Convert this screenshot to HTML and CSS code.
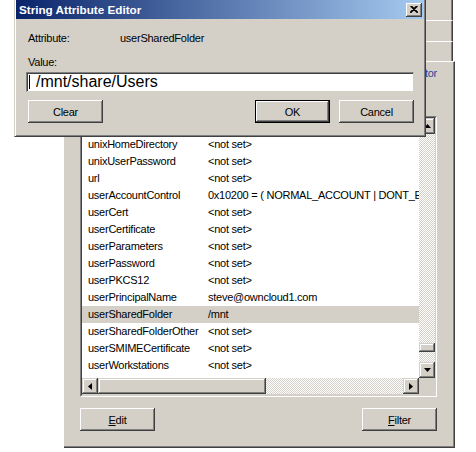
FILE: index.html
```html
<!DOCTYPE html>
<html>
<head>
<meta charset="utf-8">
<link rel="stylesheet" href="styles.css">
</head>
<body>
<div class="desk">
  <div class="sheet">
    <div class="tabrow r1"></div>
    <div class="tabrow r2"></div>
    <div class="tabrow r3"></div>
    <div class="page">
      <div class="tabfront"><span class="tablabel">Attribute Editor</span></div>
      <div class="pagebody">
        <div class="attrlabel">Attributes:</div>
        <div class="listview">
          <div class="lvinner">
            <div class="lvmain">
              <div class="lvhead"><span class="h1">Attribute</span><span class="h2">Value</span></div>
              <div class="row"><span class="c1">unixHomeDirectory</span><span class="c2">&lt;not set&gt;</span></div>
              <div class="row"><span class="c1">unixUserPassword</span><span class="c2">&lt;not set&gt;</span></div>
              <div class="row"><span class="c1">url</span><span class="c2">&lt;not set&gt;</span></div>
              <div class="row"><span class="c1">userAccountControl</span><span class="c2">0x10200 = ( NORMAL_ACCOUNT | DONT_EXPIRE_PASSWD )</span></div>
              <div class="row"><span class="c1">userCert</span><span class="c2">&lt;not set&gt;</span></div>
              <div class="row"><span class="c1">userCertificate</span><span class="c2">&lt;not set&gt;</span></div>
              <div class="row"><span class="c1">userParameters</span><span class="c2">&lt;not set&gt;</span></div>
              <div class="row"><span class="c1">userPassword</span><span class="c2">&lt;not set&gt;</span></div>
              <div class="row"><span class="c1">userPKCS12</span><span class="c2">&lt;not set&gt;</span></div>
              <div class="row"><span class="c1">userPrincipalName</span><span class="c2">steve@owncloud1.com</span></div>
              <div class="row sel"><span class="c1">userSharedFolder</span><span class="c2">/mnt</span></div>
              <div class="row"><span class="c1">userSharedFolderOther</span><span class="c2">&lt;not set&gt;</span></div>
              <div class="row"><span class="c1">userSMIMECertificate</span><span class="c2">&lt;not set&gt;</span></div>
              <div class="row"><span class="c1">userWorkstations</span><span class="c2">&lt;not set&gt;</span></div>
              <div class="row"><span class="c1">uSNChanged</span><span class="c2">155758</span></div>
            </div>
            <div class="vscroll">
              <div class="sbtn"><svg width="7" height="4" viewBox="0 0 7 4"><polygon points="3.5,0 7,4 0,4" fill="#000"/></svg></div>
              <div class="track vt1"></div>
              <div class="thumb vthumb"></div>
              <div class="track vt2"></div>
              <div class="sbtn"><svg width="7" height="4" viewBox="0 0 7 4"><polygon points="0,0 7,0 3.5,4" fill="#000"/></svg></div>
            </div>
            <div class="hscroll">
              <div class="sbtn"><svg width="4" height="7" viewBox="0 0 4 7"><polygon points="4,0 4,7 0,3.5" fill="#000"/></svg></div>
              <div class="thumb hthumb"></div>
              <div class="track ht"></div>
              <div class="sbtn"><svg width="4" height="7" viewBox="0 0 4 7"><polygon points="0,0 4,3.5 0,7" fill="#000"/></svg></div>
            </div>
            <div class="corner"></div>
          </div>
        </div>
        <div class="btnrow">
          <button class="btn"><u>E</u>dit</button>
          <button class="btn"><u>F</u>ilter</button>
        </div>
      </div>
    </div>
  </div>

  <div class="dialog">
    <div class="titlebar">
      <span class="title">String Attribute Editor</span>
      <span class="closebtn"><svg width="8" height="7" viewBox="0 0 8 7"><path d="M0.5 0 L7.5 7 M7.5 0 L0.5 7 M1.5 0 L8 6.5 M6.5 0 L0 6.5" stroke="#000" stroke-width="1.1" fill="none"/></svg></span>
    </div>
    <div class="dbody">
      <div class="drow"><span class="dlabel">Attribute:</span><span>userSharedFolder</span></div>
      <div class="vlabel">Value:</div>
      <div class="edit"><span class="caret"></span>/mnt/share/Users</div>
      <div class="dbtns">
        <button class="btn">Clear</button>
        <span class="spacer"></span>
        <button class="btn def">OK</button>
        <button class="btn">Cancel</button>
      </div>
    </div>
  </div>
</div>
</body>
</html>
```
FILE: styles.css
```css
* { box-sizing: border-box; }
html, body { margin: 0; padding: 0; background: #fff; }
body {
  font-family: "Liberation Sans", Arial, sans-serif;
  font-size: 11px;
  letter-spacing: -0.25px;
  color: #000;
}
.desk {
  position: relative;
  width: 476px;
  height: 452px;
  overflow: hidden;
  background: #fff;
}

/* background property sheet */
.sheet {
  position: absolute;
  left: 64px;
  top: 0;
  width: 391px;
  height: 448px;
  display: flex;
  flex-direction: column;
}
.tabrow {
  margin-right: 2px;
  background: #d4d0c8;
  border-right: 1px solid #404040;
  box-shadow: inset -1px 0 #808080;
}
.r1 { height: 20px; }
.r2 { height: 21px; border-top: 1px solid #fff; }
.r3 { height: 20px; border-top: 1px solid #fff; }
.page {
  flex: 1;
  background: #d4d0c8;
  border-top: 1px solid #fff;
  border-right: 1px solid #404040;
  border-bottom: 1px solid #404040;
  box-shadow: inset -1px -1px #808080;
  display: flex;
  flex-direction: column;
}
.tabfront {
  height: 23px;
  line-height: 22px;
  text-align: right;
  padding-right: 17px;
}
.tablabel { color: #24489c; }
.pagebody { padding: 0 16px; }
.attrlabel {
  margin-top: 14px;
  height: 13px;
  line-height: 13px;
  margin-bottom: 4px;
}
.listview {
  width: 357px;
  height: 281px;
  border: 1px solid;
  border-color: #808080 #fff #fff #808080;
}
.lvinner {
  width: 100%;
  height: 100%;
  border: 1px solid;
  border-color: #404040 #d4d0c8 #d4d0c8 #404040;
  display: grid;
  grid-template-columns: 337px 16px;
  grid-template-rows: 260px 16px;
}
.lvmain {
  background: #fff;
  overflow: hidden;
  white-space: nowrap;
}
.lvhead {
  height: 18px;
  display: flex;
  background: #d4d0c8;
}
.lvhead span {
  line-height: 18px;
  padding-left: 6px;
  box-shadow: inset -1px -1px #404040, inset 1px 1px #fff, inset -2px -2px #808080;
}
.h1 { width: 126px; }
.h2 { flex: 1; }
.row {
  height: 17px;
  line-height: 17px;
  display: flex;
}
.row.sel { background: #d4d0c8; }
.c1 { width: 126px; padding-left: 6px; flex: none; }
.c2 { flex: none; }

.vscroll, .hscroll { display: flex; }
.vscroll { flex-direction: column; }
.sbtn {
  width: 16px;
  height: 16px;
  flex: none;
  background: #d4d0c8;
  display: flex;
  align-items: center;
  justify-content: center;
  box-shadow: inset -1px -1px #404040, inset 1px 1px #d4d0c8, inset -2px -2px #808080, inset 2px 2px #fff;
}
.track {
  background: repeating-conic-gradient(#fff 0 25%, #d4d0c8 0 50%);
  background-size: 2px 2px;
}
.thumb {
  background: #d4d0c8;
  box-shadow: inset -1px -1px #404040, inset 1px 1px #d4d0c8, inset -2px -2px #808080, inset 2px 2px #fff;
}
.vt1 { height: 209px; }
.vthumb { height: 9px; }
.vt2 { height: 10px; }
.hthumb { width: 168px; }
.ht { width: 137px; }
.corner { background: #d4d0c8; }

.btnrow {
  margin-top: 11px;
  width: 357px;
  display: flex;
  justify-content: space-between;
}
.btn {
  width: 75px;
  height: 23px;
  padding: 0;
  border: none;
  background: #d4d0c8;
  font-family: "Liberation Sans", Arial, sans-serif;
  font-size: 11px;
  letter-spacing: -0.25px;
  color: #000;
  box-shadow: inset -1px -1px #404040, inset 1px 1px #fff, inset -2px -2px #808080, inset 2px 2px #d4d0c8;
}
.btn.def {
  border: 1px solid #000;
  box-shadow: inset -1px -1px #404040, inset 1px 1px #fff, inset -2px -2px #808080;
}

/* dialog */
.dialog {
  position: absolute;
  left: 14px;
  top: -2px;
  width: 412px;
  height: 139px;
  background: #d4d0c8;
  border: 1px solid;
  border-color: #d4d0c8 #404040 #404040 #d4d0c8;
  box-shadow: inset 1px 1px #fff, inset -1px -1px #808080;
  padding: 1px;
}
.titlebar {
  height: 19px;
  background: linear-gradient(to right, #0a246a, #a6caf0);
  display: flex;
  align-items: center;
  justify-content: space-between;
  padding: 0 2px 0 3px;
}
.title {
  color: #fff;
  font-weight: bold;
  font-size: 11.7px;
  letter-spacing: 0;
}
.closebtn {
  width: 16px;
  height: 14px;
  background: #d4d0c8;
  display: flex;
  align-items: center;
  justify-content: center;
  box-shadow: inset -1px -1px #404040, inset 1px 1px #fff, inset -2px -2px #808080;
}
.dbody { padding: 12px 10px 0 12px; }
.drow { height: 14px; line-height: 14px; display: flex; }
.dlabel { width: 92px; }
.vlabel { margin-top: 10px; height: 14px; line-height: 14px; }
.edit {
  margin: 3px 0 0 -2px;
  width: 388px;
  height: 20px;
  background: #fff;
  border: 1px solid;
  border-color: #808080 #d4d0c8 #d4d0c8 #808080;
  box-shadow: inset 1px 1px #404040;
  font-size: 16px;
  letter-spacing: 0;
  line-height: 17px;
  padding-left: 9px;
  position: relative;
}
.caret {
  position: absolute;
  left: 2px;
  top: 2px;
  width: 1px;
  height: 14px;
  background: #000;
}
.dbtns { margin-top: 8px; display: flex; }
.spacer { flex: 1; }
.dbtns .btn + .btn { margin-left: 9px; }
```
